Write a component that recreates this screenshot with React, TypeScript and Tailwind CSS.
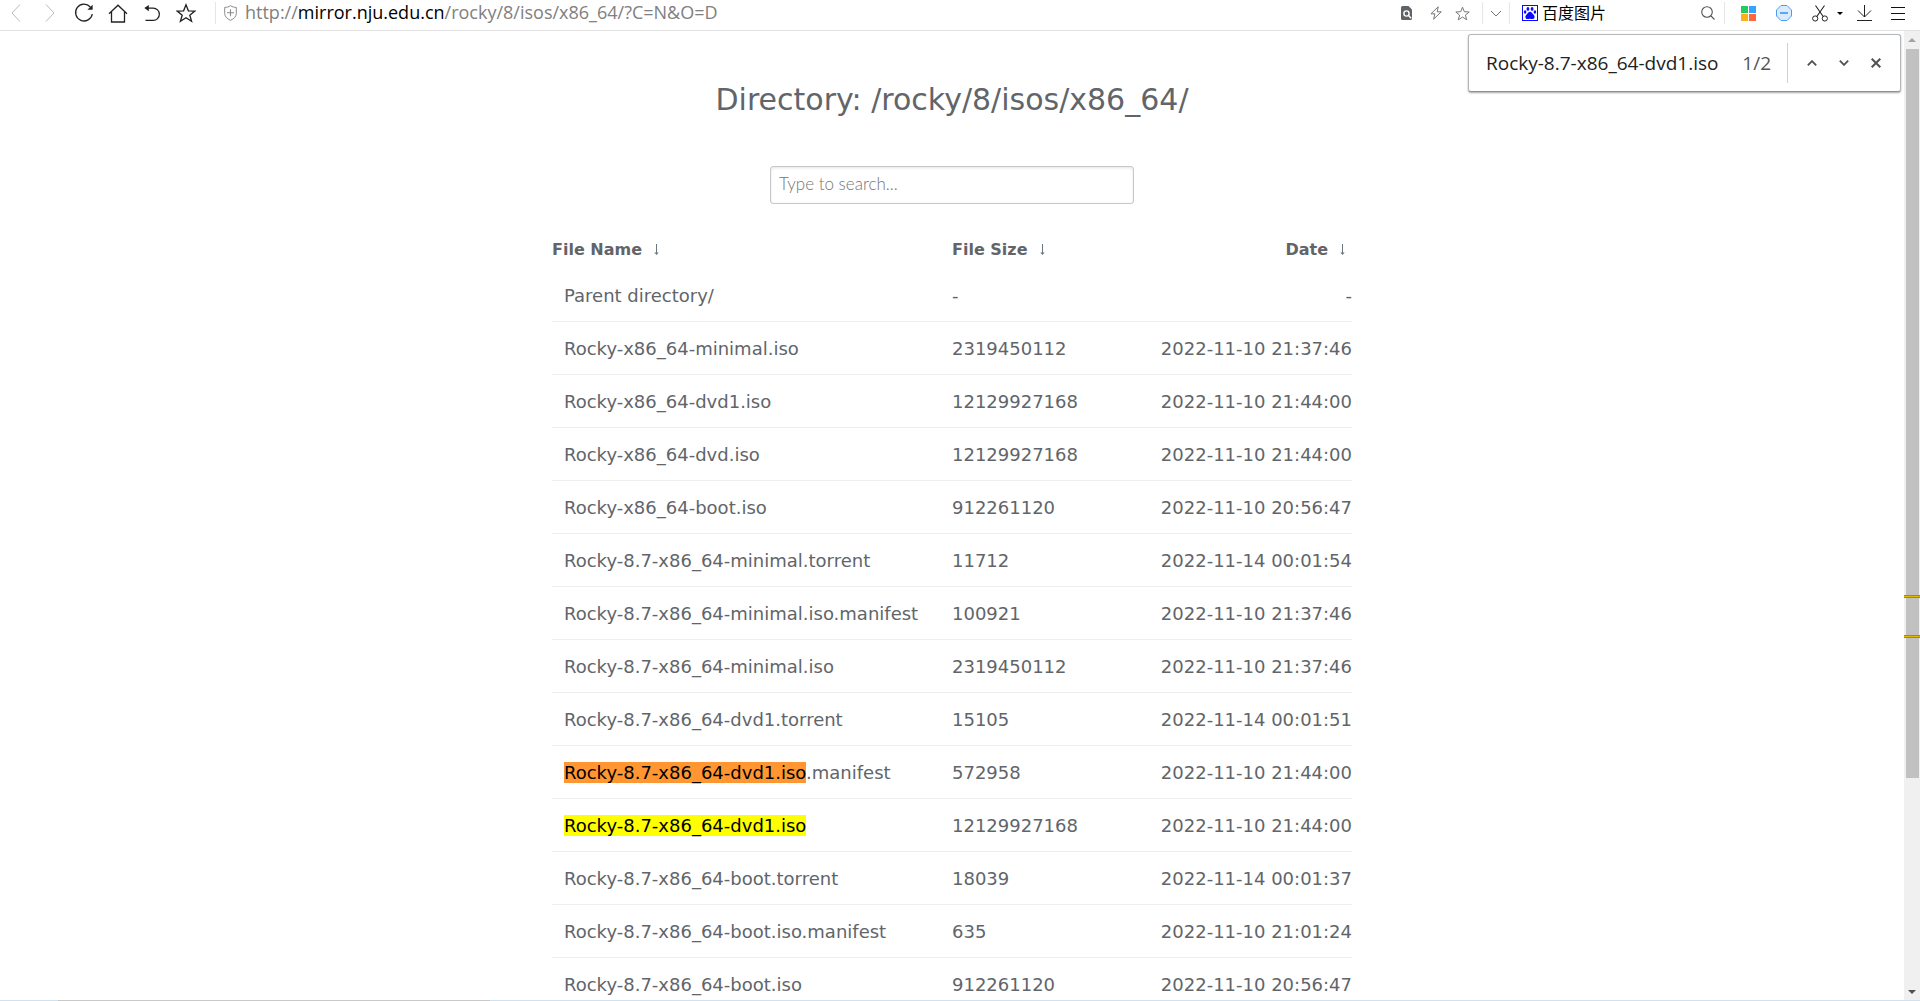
import React from "react";

type Entry = { name: string; size: string; date: string; mark?: "active" | "match" };

const QUERY = "Rocky-8.7-x86_64-dvd1.iso";

const entries: Entry[] = [
  { name: "Parent directory/", size: "-", date: "-" },
  { name: "Rocky-x86_64-minimal.iso", size: "2319450112", date: "2022-11-10 21:37:46" },
  { name: "Rocky-x86_64-dvd1.iso", size: "12129927168", date: "2022-11-10 21:44:00" },
  { name: "Rocky-x86_64-dvd.iso", size: "12129927168", date: "2022-11-10 21:44:00" },
  { name: "Rocky-x86_64-boot.iso", size: "912261120", date: "2022-11-10 20:56:47" },
  { name: "Rocky-8.7-x86_64-minimal.torrent", size: "11712", date: "2022-11-14 00:01:54" },
  { name: "Rocky-8.7-x86_64-minimal.iso.manifest", size: "100921", date: "2022-11-10 21:37:46" },
  { name: "Rocky-8.7-x86_64-minimal.iso", size: "2319450112", date: "2022-11-10 21:37:46" },
  { name: "Rocky-8.7-x86_64-dvd1.torrent", size: "15105", date: "2022-11-14 00:01:51" },
  { name: "Rocky-8.7-x86_64-dvd1.iso.manifest", size: "572958", date: "2022-11-10 21:44:00", mark: "active" },
  { name: "Rocky-8.7-x86_64-dvd1.iso", size: "12129927168", date: "2022-11-10 21:44:00", mark: "match" },
  { name: "Rocky-8.7-x86_64-boot.torrent", size: "18039", date: "2022-11-14 00:01:37" },
  { name: "Rocky-8.7-x86_64-boot.iso.manifest", size: "635", date: "2022-11-10 21:01:24" },
  { name: "Rocky-8.7-x86_64-boot.iso", size: "912261120", date: "2022-11-10 20:56:47" },
];

function Icon({
  w,
  h,
  children,
  className = "",
}: {
  w: number;
  h: number;
  children: React.ReactNode;
  className?: string;
}) {
  return (
    <svg
      width={w}
      height={h}
      viewBox={`0 0 ${w} ${h}`}
      fill="none"
      stroke="currentColor"
      aria-hidden="true"
      className={`block shrink-0 ${className}`}
    >
      {children}
    </svg>
  );
}

function NavButton({ label, disabled, children }: { label: string; disabled?: boolean; children: React.ReactNode }) {
  return (
    <button
      type="button"
      aria-label={label}
      disabled={disabled}
      className="flex w-[34px] shrink-0 justify-center text-[#222] disabled:text-[#b9b9b9]"
    >
      {children}
    </button>
  );
}

function Divider() {
  return <span className="h-[22px] w-px shrink-0 bg-[#e6e6e6]" />;
}

function Toolbar() {
  return (
    <header className="flex h-[31px] shrink-0 items-center border-b border-[#e2e2e2] bg-white pb-1 font-['Open_Sans','Noto_Sans_CJK_SC',sans-serif]">
      <nav aria-label="Navigation" className="-ml-px flex items-center">
        <NavButton label="Back" disabled>
          <Icon w={10} h={18}><path d="M9 .5 1 9l8 8.5" /></Icon>
        </NavButton>
        <NavButton label="Forward" disabled>
          <Icon w={10} h={18}><path d="M1 .5 9 9l-8 8.5" /></Icon>
        </NavButton>
        <NavButton label="Reload">
          <Icon w={20} h={20}>
            <path d="M16.3 4A8.4 8.4 0 1 0 18.3 11" strokeWidth="1.3" />
            <path d="M18.6 1.8v5h-5.2z" fill="currentColor" stroke="none" />
          </Icon>
        </NavButton>
        <NavButton label="Home">
          <Icon w={20} h={19}>
            <path d="M1 9.8 10 1.2l9 8.6M3.5 8v10h13V8" strokeWidth="1.3" />
          </Icon>
        </NavButton>
        <NavButton label="Undo">
          <Icon w={16} h={18}>
            <path d="M2 4.1h7.2a6.1 6.1 0 0 1 0 12.3H1.5" strokeWidth="1.3" />
            <path d="M.3 4.1 4.8.9v6.4z" fill="currentColor" stroke="none" />
          </Icon>
        </NavButton>
        <NavButton label="Favorites">
          <Icon w={20} h={20}>
            <path d="m10 1.8 2.4 6 6.4.3-5 4.1 1.800 6.100-5.600-3.500-5.600 3.500 1.800-6.100-5-4.100 6.400-.3z" strokeWidth="1.3" />
          </Icon>
        </NavButton>
      </nav>

      <div className="ml-3 flex min-w-0 flex-1 items-center">
        <Divider />
        <Icon w={13} h={16} className="ml-2 text-[#8a8a8a]">
          <path d="M6.5.7C4.6 2 3 2.3.7 2.4v6.1c0 3.2 2.6 5.4 5.8 6.8 3.2-1.400 5.800-3.600 5.800-6.800V2.400C10 2.300 8.400 2 6.500.7z" />
          <path d="M6.500 4.200v7M3 7.700h7" strokeWidth="1.1" />
        </Icon>
        <div
          role="textbox"
          aria-label="Address"
          tabIndex={0}
          className="ml-2 min-w-0 flex-1 truncate pb-0.5 text-lg leading-6 text-[#808080]"
        >
          http://<span className="text-black">mirror.nju.edu.cn</span>/rocky/8/isos/x86_64/?C=N&amp;O=D
        </div>
      </div>

      <button type="button" aria-label="Find in page" className="mr-[18px] text-[#5f6368]">
        <Icon w={11} h={14}>
          <path d="M1.500 0H7.500L11 3.500V12.500Q11 14 9.500 14H1.500Q0 14 0 12.500V1.500Q0 0 1.500 0z" fill="currentColor" stroke="none" />
          <circle cx="5.5" cy="7.5" r="2.6" stroke="#fff" strokeWidth="1.4" />
          <path d="m7.500 9.500 2.700 2.700" stroke="#fff" strokeWidth="1.4" />
        </Icon>
      </button>
      <button type="button" aria-label="Speed mode" className="mr-[13px] text-[#777]">
        <Icon w={12} h={14}>
          <path d="M8.200.8.900 7.800h4L3.600 13.200l7.700-7.400H7.200z" strokeLinejoin="round" />
        </Icon>
      </button>
      <button type="button" aria-label="Bookmark page" className="mr-3 text-[#777]">
        <Icon w={15} h={15}>
          <path d="m7.500 1.200 1.800 4.500 4.900.3-3.800 3.100 1.300 4.700-4.200-2.700-4.200 2.700 1.300-4.700L.800 6l4.900-.3z" />
        </Icon>
      </button>
      <Divider />
      <button type="button" aria-label="Address history" className="mx-[7px] text-[#777]">
        <Icon w={12} h={7}><path d="m1 1 5 5 5-5" /></Icon>
      </button>
      <Divider />
      <div className="ml-3 flex w-[202px] items-center">
        <button type="button" className="flex items-center gap-1 text-base leading-6 text-black">
          <svg width="16" height="16" viewBox="0 0 16 16" aria-hidden="true">
            <rect x=".5" y=".5" width="15" height="15" fill="#fff" stroke="#0a0aff" />
            <g fill="#0a0aff">
              <ellipse cx="5.9" cy="3.9" rx="1.4" ry="1.9" />
              <ellipse cx="10.1" cy="3.9" rx="1.4" ry="1.9" />
              <ellipse cx="3.1" cy="7" rx="1.3" ry="1.7" />
              <ellipse cx="12.9" cy="7" rx="1.3" ry="1.7" />
              <path d="M8 6.800c1.500 0 2.300 1.700 3.600 2.900 1.900 1.800.9 4.300-1.200 4.300-1 0-1.500-.3-2.400-.3s-1.400.3-2.400.3c-2.100 0-3.100-2.500-1.200-4.300C5.700 8.500 6.500 6.800 8 6.800z" />
            </g>
          </svg>
          百度图片
        </button>
        <input aria-label="Web search" className="h-5 min-w-0 flex-1 outline-none" />
        <button type="button" aria-label="Search" className="mr-[9px] text-[#555]">
          <Icon w={14} h={14}>
            <circle cx="6" cy="6" r="5.3" strokeWidth="1.1" />
            <path d="m10 10 3.500 3.500" strokeWidth="1.1" />
          </Icon>
        </button>
      </div>
      <Divider />
      <button type="button" aria-label="Extensions" className="ml-4">
        <svg width="15" height="15" viewBox="0 0 15 15" aria-hidden="true" className="block">
          <path fill="#24cb64" d="M0 0h7v7H0z" />
          <path fill="#35a3ff" d="M8 0h7v7H8z" />
          <path fill="#ffb017" d="M0 8h7v7H0z" />
          <path fill="#ff6540" d="M8 8h7v7H8z" />
        </svg>
      </button>
      <button type="button" aria-label="Ad filter" className="ml-5 text-[#4a9ff5]">
        <Icon w={16} h={16}>
          <path d="M5 .5h6L15.500 5v6L11 15.500H5L.5 11V5z" fill="#d9ebfd" strokeLinejoin="round" />
          <path d="M4 8h8" strokeWidth="1.8" />
        </Icon>
      </button>
      <button type="button" aria-label="Screenshot" className="ml-5 text-[#222]">
        <Icon w={16} h={17}>
          <circle cx="3.2" cy="13.5" r="2.6" />
          <circle cx="12.8" cy="13.5" r="2.6" />
          <path d="m3.500.5 7.700 11M12.500.5l-7.700 11" strokeWidth="1.1" />
        </Icon>
      </button>
      <button type="button" aria-label="Screenshot options" className="ml-[9px] text-black">
        <Icon w={6} h={3}><path d="M0 0h6L3 3z" fill="currentColor" stroke="none" /></Icon>
      </button>
      <button type="button" aria-label="Downloads" className="ml-[14px] text-[#222]">
        <Icon w={15} h={16}>
          <path d="M7.500 0v12M1 5.500l6.500 6.500L14 5.500M0 15.500h15" />
        </Icon>
      </button>
      <button type="button" aria-label="Menu" className="mr-[15px] ml-[19px] text-[#111]">
        <Icon w={14} h={13}><path d="M0 .5h14M0 6.500h14M0 12.500h14" /></Icon>
      </button>
    </header>
  );
}

function FindBar() {
  return (
    <div
      role="search"
      aria-label="Find in page"
      className="absolute top-[3px] right-[19px] flex h-[58px] w-[433px] items-center rounded-[3px] border border-[#b4b7ba] border-b-[#8f9295] bg-white pl-[17px] font-['Open_Sans',sans-serif] shadow-[0_1px_2px_rgba(0,0,0,0.35)]"
    >
      <input
        aria-label="Find"
        defaultValue={QUERY}
        className="min-w-0 flex-1 text-[19px] leading-6 text-[#222] outline-none"
      />
      <span className="mr-4 text-[19px] leading-6 text-[#555]">1/2</span>
      <span className="h-10 w-px bg-[#d0d0d0]" />
      <div className="flex items-center gap-[22px] px-[19px] text-[#4f5357]">
        <button type="button" aria-label="Previous match">
          <Icon w={10} h={6}><path d="m.8 5.300 4.200-4.200 4.200 4.200" strokeWidth="1.8" /></Icon>
        </button>
        <button type="button" aria-label="Next match">
          <Icon w={10} h={6}><path d="m.8.700 4.200 4.200L9.200.700" strokeWidth="1.8" /></Icon>
        </button>
        <button type="button" aria-label="Close find bar">
          <Icon w={10} h={10}><path d="m.7.700 8.600 8.600M9.300.700.700 9.300" strokeWidth="2" /></Icon>
        </button>
      </div>
    </div>
  );
}

function SortLink({ column }: { column: string }) {
  return (
    <a href="#sort" aria-label={`Sort by ${column}`} className="ml-3 inline-block text-[#6b7580]">
      <Icon w={5} h={11}>
        <path d="M2.500 0v10" />
        <path d="M.3 8.500h4.400L2.500 11z" fill="currentColor" stroke="none" />
      </Icon>
    </a>
  );
}

function FileName({ entry }: { entry: Entry }) {
  if (!entry.mark) return <>{entry.name}</>;
  return (
    <>
      <mark className={entry.mark === "active" ? "bg-[#ff9632] text-black" : "bg-[#ffff00] text-black"}>{QUERY}</mark>
      {entry.name.slice(QUERY.length)}
    </>
  );
}

function Scrollbar() {
  return (
    <div aria-hidden="true" className="flex w-4 shrink-0 flex-col bg-[#f0f0f0]">
      <div className="flex h-[18px] shrink-0 items-center justify-center">
        <Icon w={8} h={4} className="text-[#a3a3a3]"><path d="M4 0 8 4H0z" fill="currentColor" stroke="none" /></Icon>
      </div>
      <div className="relative min-h-0 flex-1">
        <div className="mr-px ml-0.5 h-[78%] bg-[#c1c1c1]" />
        <span className="absolute inset-x-0 top-[58.5%] h-[3px] border-y border-[#a58b10] bg-[#e0b800]" />
        <span className="absolute inset-x-0 top-[62.7%] h-[3px] border-y border-[#a58b10] bg-[#e0b800]" />
      </div>
      <div className="flex h-[17px] shrink-0 items-center justify-center">
        <Icon w={8} h={4} className="text-[#505050]"><path d="M0 0h8L4 4z" fill="currentColor" stroke="none" /></Icon>
      </div>
    </div>
  );
}

export default function App() {
  return (
    <div className="flex h-screen flex-col overflow-hidden bg-white">
      <Toolbar />
      <div className="relative flex min-h-0 flex-1">
        <main className="min-w-0 flex-1 overflow-hidden px-4 pt-[49px] font-['DejaVu_Sans',sans-serif] text-[#61656a]">
          <h1 className="text-center text-3xl leading-10">Directory: /rocky/8/isos/x86_64/</h1>
          <input
            type="text"
            aria-label="Search files"
            placeholder="Type to search..."
            className="mx-auto mt-[46px] block h-[38px] w-full max-w-[364px] rounded-[3px] border border-[#c8c8c8] px-2 pb-1 font-['Lato',sans-serif] text-[17px] font-light shadow-[inset_0_1px_3px_#e4e4e4] outline-none placeholder:text-[#757575]"
          />
          <table className="mx-auto mt-6 w-full max-w-[800px] table-fixed border-separate border-spacing-0 text-lg leading-6">
            <thead>
              <tr className="h-[41px] text-base">
                <th scope="col" className="w-1/2 pt-0.5 text-left font-bold">File Name<SortLink column="name" /></th>
                <th scope="col" className="w-[22%] pt-0.5 text-left font-bold">File Size<SortLink column="size" /></th>
                <th scope="col" className="pt-0.5 pr-[7px] text-right font-bold">Date<SortLink column="date" /></th>
              </tr>
            </thead>
            <tbody>
              {entries.map((entry) => (
                <tr key={entry.name} className="h-[53px]">
                  <td className="border-b border-[#eeeeee] pt-0.5 pl-3 whitespace-nowrap">
                    <a href="#file"><FileName entry={entry} /></a>
                  </td>
                  <td className="border-b border-[#eeeeee] pt-0.5">{entry.size}</td>
                  <td className="border-b border-[#eeeeee] pt-0.5 text-right whitespace-nowrap">{entry.date}</td>
                </tr>
              ))}
            </tbody>
          </table>
        </main>
        <Scrollbar />
        <FindBar />
      </div>
      <div aria-hidden="true" className="flex h-px shrink-0 bg-[#cfe2ef]">
        <span className="ml-[3%] w-[22.5%] bg-[#c9c9c9]" />
      </div>
    </div>
  );
}
